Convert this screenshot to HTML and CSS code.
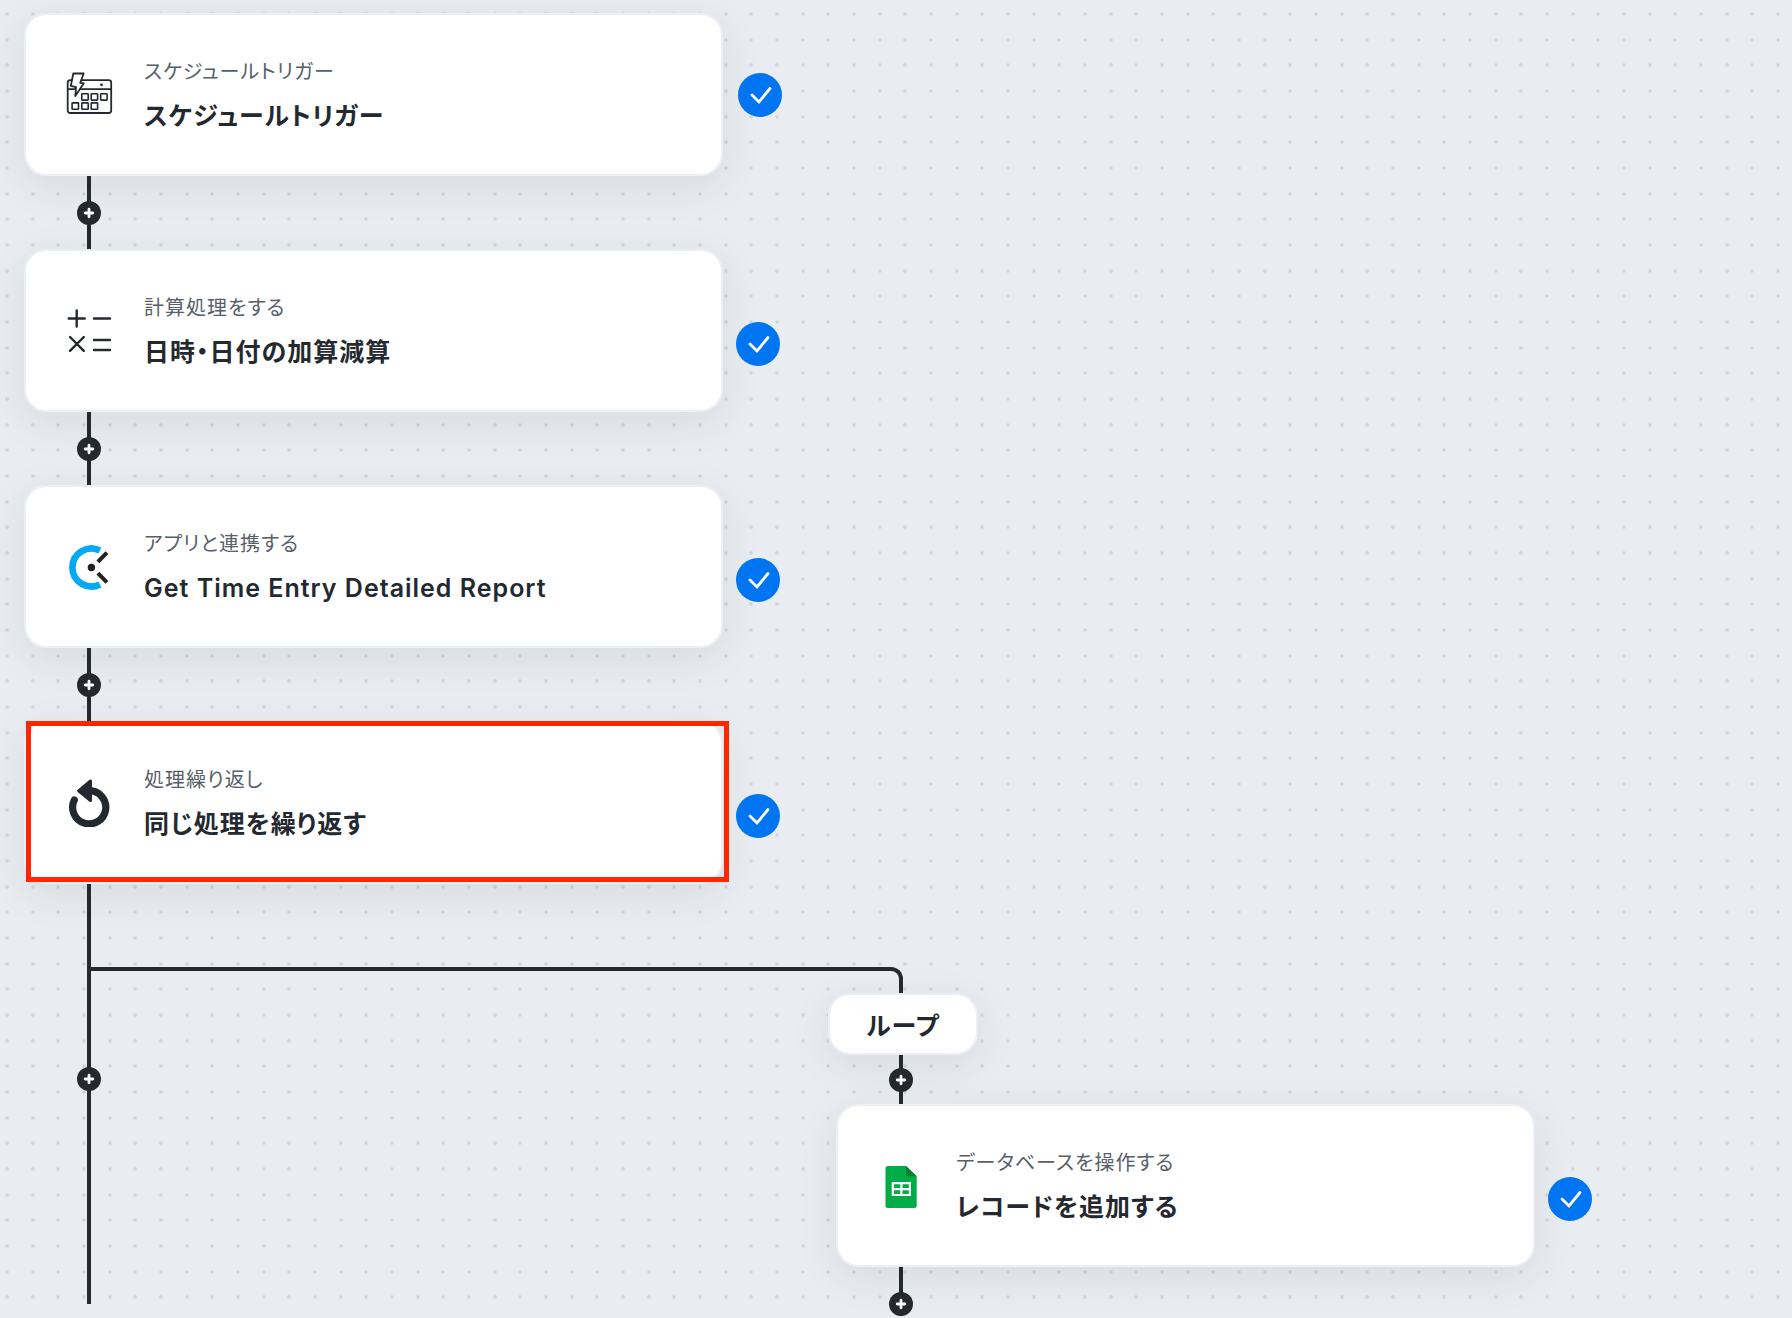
FILE: index.html
```html
<!DOCTYPE html>
<html lang="ja">

<head>
    <meta charset="UTF-8">
    <meta name="viewport" content="width=device-width, initial-scale=1.0">
    <title>フロー</title>

    <link rel="stylesheet" href="styles.css">
</head>

<body>
    <!-- shared shapes -->
    <svg class="defs" aria-hidden="true">
        <symbol id="check" viewBox="0 0 44 44">
            <circle cx="22" cy="22" r="22" fill="#0075f2" />
            <path d="M14 22l7 7L32 15.500" fill="none" stroke="#fff" stroke-width="2.8" stroke-linecap="round" />
        </symbol>
        <symbol id="plus" viewBox="0 0 24 24">
            <path d="M12 8.200v7.600M8.200 12h7.600" fill="none" stroke="#fff" stroke-width="2.8" stroke-linecap="round" />
        </symbol>
    </svg>

    <main class="canvas">
        <div class="step first">
            <article class="card">
                <svg class="icon" viewBox="0 0 48 48" fill="none" stroke="#24292f" stroke-width="1.8">
                    <rect x="2.700" y="9.200" width="43.500" height="32.800" rx="2.500" />
                    <path d="M2.700 18.200h43.500" />
                    <g stroke-width="1.600">
                        <rect x="16.800" y="22.700" width="6.400" height="6.400" rx=".6" />
                        <rect x="26.200" y="22.700" width="6.400" height="6.400" rx=".6" />
                        <rect x="35.700" y="22.700" width="6.400" height="6.400" rx=".6" />
                        <rect x="7.100" y="31.900" width="6.400" height="6.400" rx=".6" />
                        <rect x="16.800" y="31.900" width="6.400" height="6.400" rx=".6" />
                        <rect x="26.200" y="31.900" width="6.400" height="6.400" rx=".6" />
                    </g>
                    <path d="M8.300 2.500h10.400l-3.500 9.300 3.600.5-8.500 12.800.7-8.900-5.200-1.400z" fill="#fff" stroke-linejoin="round" />
                    <circle cx="36.500" cy="13.800" r="1.400" fill="#24292f" stroke="none" />
                </svg>
                <div class="text">
                    <p class="kind">スケジュールトリガー</p>
                    <h2 class="name">スケジュールトリガー</h2>
                </div>
            </article>
            <svg class="check" role="img" aria-label="完了"><use href="#check" /></svg>
        </div>

        <div class="connector">
            <button type="button" class="add" aria-label="追加"><svg><use href="#plus" /></svg></button>
        </div>

        <div class="step">
            <article class="card">
                <svg class="icon" viewBox="0 0 48 48" fill="none" stroke="#24292f" stroke-width="2.4" stroke-linecap="round">
                    <path d="M11.700 3.500v16M3.700 11.500h16M29 11.500h16M5 30l13.800 13.800M18.800 30L5 43.800M29 33h16M29 43h16" />
                </svg>
                <div class="text">
                    <p class="kind">計算処理をする</p>
                    <h2 class="name">日時・日付の加算減算</h2>
                </div>
            </article>
            <svg class="check" role="img" aria-label="完了"><use href="#check" /></svg>
        </div>

        <div class="connector">
            <button type="button" class="add" aria-label="追加"><svg><use href="#plus" /></svg></button>
        </div>

        <div class="step">
            <article class="card">
                <svg class="icon" viewBox="0 0 48 48" fill="none">
                    <path d="M34.900 7.500a19 19 0 1 0 0 34" stroke="#03a9f4" stroke-width="6.600" />
                    <path d="M32.900 18.800l9-9.200M32.900 30.200l9 9.200" stroke="#222" stroke-width="4" />
                    <circle cx="26.400" cy="24.500" r="3.700" fill="#222" />
                </svg>
                <div class="text">
                    <p class="kind">アプリと連携する</p>
                    <h2 class="name">Get Time Entry Detailed Report</h2>
                </div>
            </article>
            <svg class="check" role="img" aria-label="完了"><use href="#check" /></svg>
        </div>

        <div class="connector">
            <button type="button" class="add" aria-label="追加"><svg><use href="#plus" /></svg></button>
        </div>

        <div class="step marked">
            <article class="card">
                <svg class="icon" viewBox="0 0 48 48" fill="none" stroke="#24292f">
                    <path d="M9.300 21A16.600 16.600 0 1 0 24.300 11.700" stroke-width="7.200" stroke-linecap="round" />
                    <path d="M25.500 2v19.600L13.600 11.800z" fill="#24292f" stroke-width="3" stroke-linejoin="round" />
                </svg>
                <div class="text">
                    <p class="kind">処理繰り返し</p>
                    <h2 class="name">同じ処理を繰り返す</h2>
                </div>
            </article>
            <svg class="check" role="img" aria-label="完了"><use href="#check" /></svg>
        </div>

        <div class="split">
            <div class="trunk">
                <button type="button" class="add" aria-label="追加"><svg><use href="#plus" /></svg></button>
            </div>
            <section class="branch">
                <div class="elbow"></div>
                <div class="loop">
                    <h3 class="label">ループ</h3>
                    <div class="connector short">
                        <button type="button" class="add" aria-label="追加"><svg><use href="#plus" /></svg></button>
                    </div>
                    <div class="step">
                        <article class="card">
                            <svg class="icon" viewBox="0 0 48 48">
                                <path d="M11 4h18l10.700 10.300V43.500a2.500 2.500 0 0 1-2.500 2.500H11a2.500 2.500 0 0 1-2.500-2.500v-37A2.500 2.500 0 0 1 11 4z" fill="#00ac47" />
                                <path d="M29 4l10.700 10.300H29z" fill="#00832d" />
                                <path d="M14.700 20H34v14H14.700z" fill="#fff" />
                                <path d="M17 22.300h6.300V26H17zM25.500 22.300h6.300V26h-6.300zM17 28.200h6.300v3.700H17zM25.500 28.200h6.300v3.700h-6.300z" fill="#00ac47" />
                            </svg>
                            <div class="text">
                                <p class="kind">データベースを操作する</p>
                                <h2 class="name">レコードを追加する</h2>
                            </div>
                        </article>
                        <svg class="check" role="img" aria-label="完了"><use href="#check" /></svg>
                    </div>
                    <div class="connector short end">
                        <button type="button" class="add" aria-label="追加"><svg><use href="#plus" /></svg></button>
                    </div>
                </div>
            </section>
        </div>
    </main>
</body>

</html>
```
FILE: styles.css
```css
*,
*::after {
    box-sizing: border-box;
    margin: 0;
    padding: 0;
}

body {
    min-height: 100vh;
    overflow: hidden;
    font-family: Inter, "Noto Sans CJK JP", sans-serif;
    font-feature-settings: "palt";
    letter-spacing: 1px;
    color: #24292f;
    background-color: #e9edf2;
    /* 3 x 3 dots per tile */
    background-image: url("data:image/svg+xml,%3Csvg xmlns='http://www.w3.org/2000/svg' width='77' height='77' fill='%23d0d5db'%3E%3Cdefs%3E%3Cg id='r'%3E%3Ccircle cx='7' cy='0' r='1.8'/%3E%3Ccircle cx='33' cy='0' r='1.8'/%3E%3Ccircle cx='58' cy='0' r='1.8'/%3E%3C/g%3E%3C/defs%3E%3Cuse href='%23r' y='14'/%3E%3Cuse href='%23r' y='40'/%3E%3Cuse href='%23r' y='65'/%3E%3C/svg%3E");
}

.defs {
    display: none;
}

.canvas {
    padding: 13px 24px 0;
}

.step {
    display: flex;
    align-items: center;
    gap: 13px;
    position: relative;
}

.card {
    display: flex;
    align-items: center;
    gap: 31px;
    flex: 0 1 699px;
    padding: 34px 39px;
    border: 2px solid #ecf0f4;
    border-radius: 22px;
    background-color: #fff;
    background-clip: padding-box;
    box-shadow: 0 10px 40px rgba(36, 41, 47, 0.09);
}

.icon {
    flex: none;
    width: 48px;
    height: 48px;
}

.text {
    padding-top: 3px;
}

.kind {
    font-size: 20px;
    line-height: 40px;
    font-weight: 400;
    color: #57606a;
}

.name {
    font-size: 25px;
    line-height: 48px;
    font-weight: 600;
}

.check {
    flex: none;
    width: 44px;
    height: 44px;
    margin-top: 26px;
}

.first .check {
    margin-top: 0;
    margin-left: 2px;
}

/* highlighted step */
.marked::after {
    content: "";
    position: absolute;
    top: 0;
    left: 2px;
    width: 703px;
    height: 161px;
    border: 5px solid #ff2600;
}

.connector {
    display: flex;
    flex-direction: column;
    align-items: center;
    justify-content: center;
    position: relative;
    width: 4px;
    height: 73px;
    margin-left: 63px;
    background-color: #24292f;
}

.add {
    display: block;
    flex: none;
    width: 24px;
    height: 24px;
    border: none;
    border-radius: 50%;
    background-color: #24292f;
    cursor: pointer;
}

.add svg {
    display: block;
    width: 24px;
    height: 24px;
}

.split {
    display: flex;
    align-items: flex-start;
    padding-left: 63px;
}

.trunk {
    display: flex;
    flex: none;
    flex-direction: column;
    align-items: center;
    width: 4px;
    height: 420px;
    padding-top: 183px;
    background-color: #24292f;
}

.branch {
    flex: 1;
    padding-top: 83px;
}

.elbow {
    width: 812px;
    height: 26px;
    border: solid #24292f;
    border-width: 4px 4px 0 0;
    border-top-right-radius: 12px;
}

.loop {
    padding-left: 737px;
}

.loop .step {
    margin-left: 8px;
}

.label {
    width: 150px;
    padding: 7px 0 3px;
    border: 2px solid #ecf0f4;
    border-radius: 22px;
    background-color: #fff;
    background-clip: padding-box;
    box-shadow: 0 10px 40px rgba(36, 41, 47, 0.09);
    font-size: 25px;
    line-height: 48px;
    font-weight: 600;
    text-align: center;
}

.short {
    height: 49px;
    margin-left: 71px;
}

.end {
    justify-content: flex-end;
}
```
